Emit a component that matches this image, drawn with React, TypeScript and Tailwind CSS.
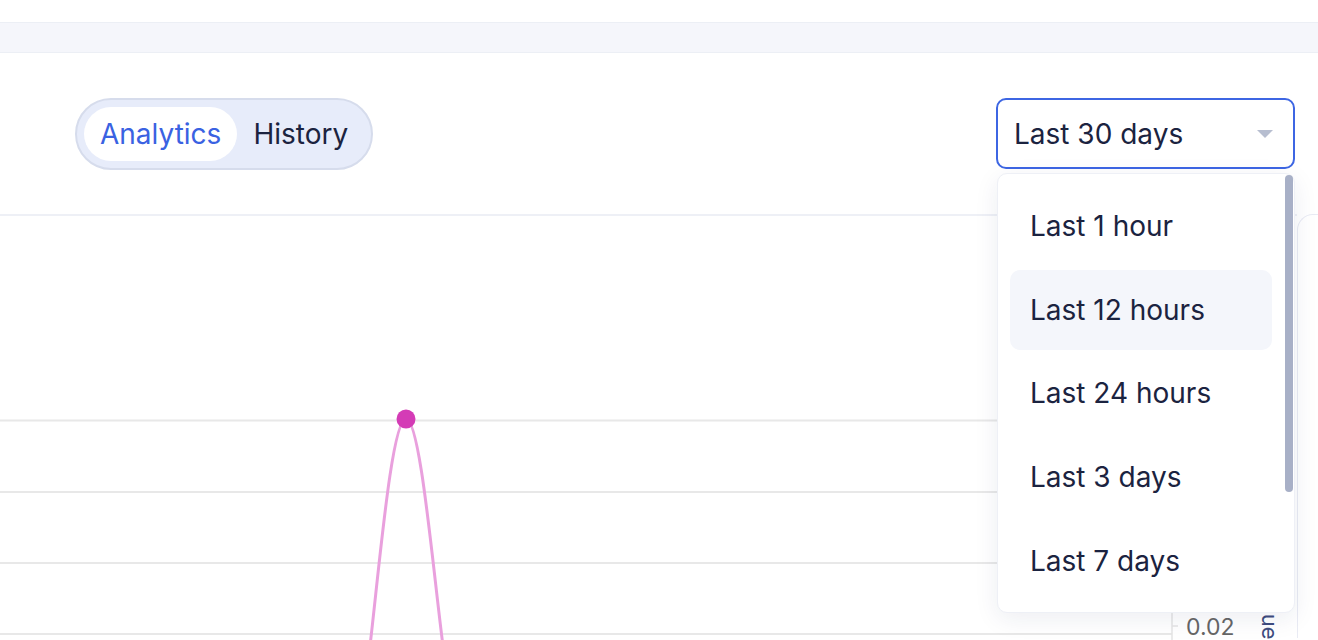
import { useState } from "react";

const ranges = ["Last 1 hour", "Last 12 hours", "Last 24 hours", "Last 3 days", "Last 7 days"];

function TabSwitch() {
  const [tab, setTab] = useState("Analytics");
  return (
    <div className="flex rounded-full border-2 border-[#d6dcec] bg-[#e7ecfa] p-[7px]">
      {["Analytics", "History"].map((t) => (
        <button
          key={t}
          onClick={() => setTab(t)}
          className={`h-[54px] rounded-full px-[16px] text-[28px] leading-none ${
            tab === t ? "bg-white text-[#3a62e2]" : "text-[#1b2340]"
          }`}
        >
          {t}
        </button>
      ))}
    </div>
  );
}

function RangeSelect() {
  return (
    <div className="relative w-[299px]">
      <button className="flex h-[71px] w-full items-center justify-between rounded-[10px] border-2 border-[#3d66e3] bg-white pl-[16px] pr-[20px] text-[28px] text-[#1b2340]">
        <span>Last 30 days</span>
        <svg width="16" height="8" viewBox="0 0 16 8">
          <path d="M0 0 L16 0 L8 8 Z" fill="#b7bed0" />
        </svg>
      </button>
      <div className="absolute left-px top-[75px] z-10 flex h-[440px] w-[298px] flex-col gap-[4px] rounded-[10px] border border-[#eef0f6] bg-white pb-[11px] pl-[12px] pr-[22px] pt-[12px] shadow-[0_6px_24px_rgba(30,40,90,0.08)]">
        {ranges.map((r, i) => (
          <div
            key={r}
            className={`flex h-[80px] items-center rounded-[10px] pl-[20px] text-[28px] text-[#1b2340] ${
              i === 1 ? "bg-[#f4f6fb]" : ""
            }`}
          >
            {r}
          </div>
        ))}
        <div className="absolute right-px top-[1px] h-[317px] w-[8px] rounded-full bg-[#a8b0c7]" />
      </div>
    </div>
  );
}

function Chart() {
  const grid = [204.5, 276, 347, 418];
  return (
    <svg width="1297" height="424" viewBox="0 0 1297 424" className="block">
      {grid.map((y) => (
        <line key={y} x1="0" x2="1172" y1={y} y2={y} stroke="#e8e8e8" strokeWidth="2" />
      ))}
      <line x1="1172" x2="1172" y1="396" y2="424" stroke="#e4e4e4" strokeWidth="1.5" />
      <line x1="1172" x2="1178" y1="410" y2="410" stroke="#e4e4e4" strokeWidth="1.5" />
      <text x="1186" y="419" fontSize="23" fill="#666666" fontFamily="Inter, sans-serif">
        0.02
      </text>
      <text
        x="0"
        y="0"
        fontSize="22"
        fill="#3e4c7e"
        fontFamily="Inter, sans-serif"
        transform="translate(1262 366) rotate(90)"
      >
        Value
      </text>
      <path
        d="M370 430 C380 344 392 203 406 203 C420 203 432 344 443 430"
        fill="none"
        stroke="#e9a0dd"
        strokeWidth="3"
      />
      <circle cx="406" cy="203" r="9.5" fill="#d43bb6" />
    </svg>
  );
}

export default function App() {
  return (
    <div className="h-[640px] w-[1318px] overflow-hidden bg-white font-['Inter',sans-serif] text-[#1b2340]">
      <div className="h-[22px]" />
      <div className="h-[31px] border-y border-[#eceff5] bg-[#f5f6fb]" />
      <div className="flex h-[161px] items-start justify-between pl-[75px] pr-[23px] pt-[45px]">
        <TabSwitch />
        <RangeSelect />
      </div>
      <div className="flex">
        <div className="border-t-2 border-[#eef0f6]">
          <Chart />
        </div>
        <div className="h-[424px] flex-1 rounded-tl-2xl border-l border-t border-[#e9ebf4]" />
      </div>
    </div>
  );
}
